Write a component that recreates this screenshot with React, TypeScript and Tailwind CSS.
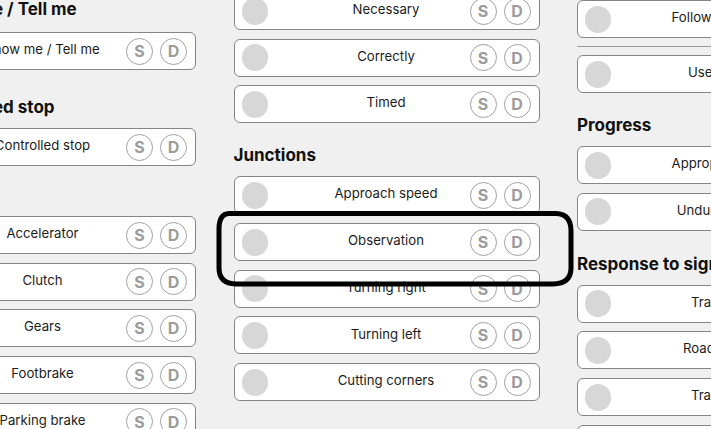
import React from 'react'

type Section = {
  title?: string
  items: string[]
  mt: string
  mb: string
  divider?: boolean
}

const font = { fontFamily: 'Inter, "Noto Sans", sans-serif' }

function MarkCard({ label }: { label: string }) {
  return (
    <div className="grid h-[38px] grid-cols-[1fr_auto_1fr] items-center rounded-[6px] border border-[#858585] bg-white pl-[7px] pr-[8px]">
      <div className="h-[27px] w-[26px] justify-self-start rounded-full bg-[#d8d7d8]" />
      <span className="mt-[-2px] whitespace-nowrap text-[13.2px] text-[#1c1c1c]">{label}</span>
      <div className="flex gap-[7px] justify-self-end">
        <span className="flex h-[27px] w-[27px] items-center justify-center rounded-full border border-[#a0a0a0] text-[16px] font-bold text-[#9c9c9c]">
          S
        </span>
        <span className="flex h-[27px] w-[27px] items-center justify-center rounded-full border border-[#a0a0a0] text-[16px] font-bold text-[#9c9c9c]">
          D
        </span>
      </div>
    </div>
  )
}

function Column({ sections, className, headingClass }: { sections: Section[]; className: string; headingClass?: string }) {
  return (
    <div className={`flex w-[306px] shrink-0 flex-col ${className}`}>
      {sections.map((s, i) => (
        <div key={i} className="flex flex-col">
          {s.divider && <div className="my-[8px] h-px bg-[#9a9a9a]" />}
          {s.title !== undefined && (
            <h2 className={`${s.mt} ${s.mb} h-[22px] whitespace-nowrap text-[17px] font-bold leading-[22px] text-[#111] ${headingClass ?? ''}`}>
              {s.title}
            </h2>
          )}
          <div className="flex flex-col gap-[8.7px]">
            {s.items.map((item) => (
              <MarkCard key={item} label={item} />
            ))}
          </div>
        </div>
      ))}
    </div>
  )
}

const leftSections: Section[] = [
  { title: 'Show me / Tell me', items: ['Show me / Tell me'], mt: 'mt-[-2px]', mb: 'mb-[12px]' },
  { title: 'Controlled stop', items: ['Controlled stop'], mt: 'mt-[26px]', mb: 'mb-[10px]' },
  {
    title: 'Control',
    items: ['Accelerator', 'Clutch', 'Gears', 'Footbrake', 'Parking brake'],
    mt: 'mt-[18px]',
    mb: 'mb-[10px]',
  },
]

const centerSections: Section[] = [
  { items: ['Necessary', 'Correctly', 'Timed'], mt: '', mb: '' },
  {
    title: 'Junctions',
    items: ['Approach speed', 'Observation', 'Turning right', 'Turning left', 'Cutting corners'],
    mt: 'mt-[21px]',
    mb: 'mb-[10px]',
  },
]

const rightSections: Section[] = [
  { items: ['Following distance'], mt: '', mb: '' },
  { items: ['Use of speed'], mt: '', mb: '', divider: true },
  { title: 'Progress', items: ['Appropriate speed', 'Undue hesitation'], mt: 'mt-[21px]', mb: 'mb-[10px]' },
  {
    title: 'Response to signs / signals',
    items: ['Traffic signs', 'Road markings', 'Traffic lights', 'Traffic controllers'],
    mt: 'mt-[22px]',
    mb: 'mb-[10px]',
  },
]

export default function App() {
  return (
    <div className="relative h-[429px] w-[711px] overflow-hidden bg-[#f0f0f0]" style={font}>
      <div className="ml-[-110px] flex items-start gap-[37.5px]">
        <Column sections={leftSections} className="mt-0" headingClass="pl-[37px]" />
        <Column sections={centerSections} className="mt-[-8px]" />
        <Column sections={rightSections} className="mt-0" />
      </div>

      {/* hand-drawn highlight round the Observation row */}
      <svg className="pointer-events-none absolute left-0 top-0" width="711" height="429" viewBox="0 0 711 429">
        <path
          d="M229 213.5 L556 213.5 Q571 214 571 231 L571 268 Q571 283.5 553 284 L236 284 Q219 283.5 219 268 L219 229 Q219 214 229 213.5 Z"
          fill="none"
          stroke="#000"
          strokeWidth="5"
          strokeLinejoin="round"
        />
      </svg>
    </div>
  )
}
